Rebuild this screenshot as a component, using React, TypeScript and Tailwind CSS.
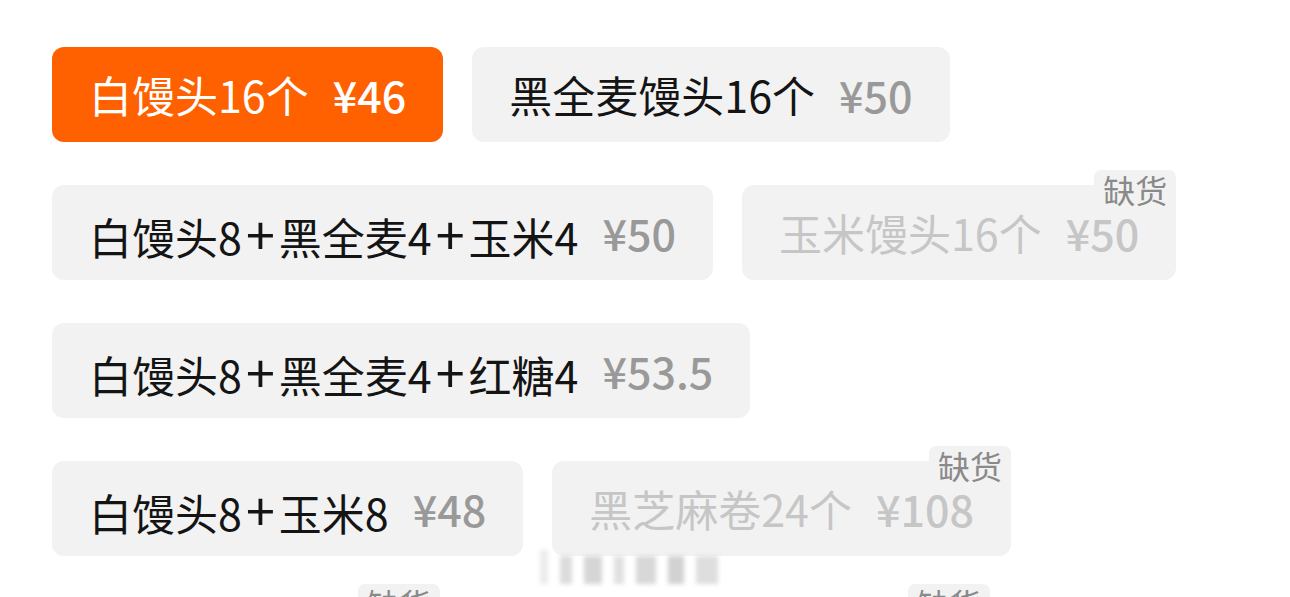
import React from 'react';

type Sku = {
  name: string;
  price: string;
  selected?: boolean;
  soldOut?: boolean;
};

const rows: Sku[][] = [
  [
    { name: '白馒头16个', price: '¥46', selected: true },
    { name: '黑全麦馒头16个', price: '¥50' },
  ],
  [
    { name: '白馒头8+黑全麦4+玉米4', price: '¥50' },
    { name: '玉米馒头16个', price: '¥50', soldOut: true },
  ],
  [{ name: '白馒头8+黑全麦4+红糖4', price: '¥53.5' }],
  [
    { name: '白馒头8+玉米8', price: '¥48' },
    { name: '黑芝麻卷24个', price: '¥108', soldOut: true },
  ],
];

function SoldOutTag() {
  return (
    <span className="absolute -top-[15px] right-0 flex h-[38px] items-center rounded-[7px] bg-[#f2f2f2] px-[9px] text-[32px] leading-none text-[#8a8a8a]">
      缺货
    </span>
  );
}

// the "+" in the name is drawn bigger than the CJK font's own
function Name({ text }: { text: string }) {
  const parts = text.split('+');
  return (
    <>
      {parts.map((p, i) => (
        <React.Fragment key={i}>
          {i > 0 && <span className="px-[4px] text-[52px] leading-none">+</span>}
          {p}
        </React.Fragment>
      ))}
    </>
  );
}

function SkuCard({ sku }: { sku: Sku }) {
  const bg = sku.selected ? 'bg-[#ff6000]' : 'bg-[#f2f2f2]';
  const nameColor = sku.selected ? 'text-white' : sku.soldOut ? 'text-[#c6c6c6]' : 'text-[#141414]';
  const priceColor = sku.selected ? 'text-white' : sku.soldOut ? 'text-[#c6c6c6]' : 'text-[#999999]';
  return (
    <div className={`relative flex h-[95px] items-center rounded-[12px] px-[37px] ${bg}`}>
      <span className={`text-[43px] leading-none ${nameColor}`}>
        <Name text={sku.name} />
      </span>
      <span className={`ml-[24px] text-[43px] font-medium leading-none ${priceColor}`}>{sku.price}</span>
      {sku.soldOut && <SoldOutTag />}
    </div>
  );
}

export default function App() {
  return (
    <div
      className="relative h-[597px] w-[1290px] overflow-hidden bg-white pl-[52px] pt-[47px]"
      style={{ fontFamily: '"Noto Sans CJK SC", "Noto Sans", sans-serif' }}
    >
      <div className="flex flex-col gap-[43px]">
        {rows.map((row, i) => (
          <div key={i} className="flex gap-[29px]">
            {row.map((sku) => (
              <SkuCard key={sku.name} sku={sku} />
            ))}
          </div>
        ))}
        {/* next row, only the tags peek in */}
        <div className="flex gap-[29px]">
          <div className="relative h-[95px] w-[388px] rounded-[12px] bg-[#f2f2f2]">
            <SoldOutTag />
          </div>
          <div className="relative h-[95px] w-[521px] rounded-[12px] bg-[#f2f2f2]">
            <SoldOutTag />
          </div>
        </div>
      </div>

      {/* blurred watermark */}
      <div className="pointer-events-none absolute left-[540px] top-[550px] flex h-[34px] items-end gap-[12px] blur-[2px]">
        <div className="h-[34px] w-[8px] bg-[#ececec]" />
        <div className="h-[28px] w-[12px] bg-[#dcdcdc]" />
        <div className="h-[28px] w-[18px] bg-[#d6d6d6]" />
        <div className="h-[28px] w-[10px] bg-[#e0e0e0]" />
        <div className="h-[28px] w-[20px] bg-[#d8d8d8]" />
        <div className="h-[28px] w-[16px] bg-[#d2d2d2]" />
        <div className="h-[28px] w-[22px] bg-[#dedede]" />
      </div>
    </div>
  );
}
